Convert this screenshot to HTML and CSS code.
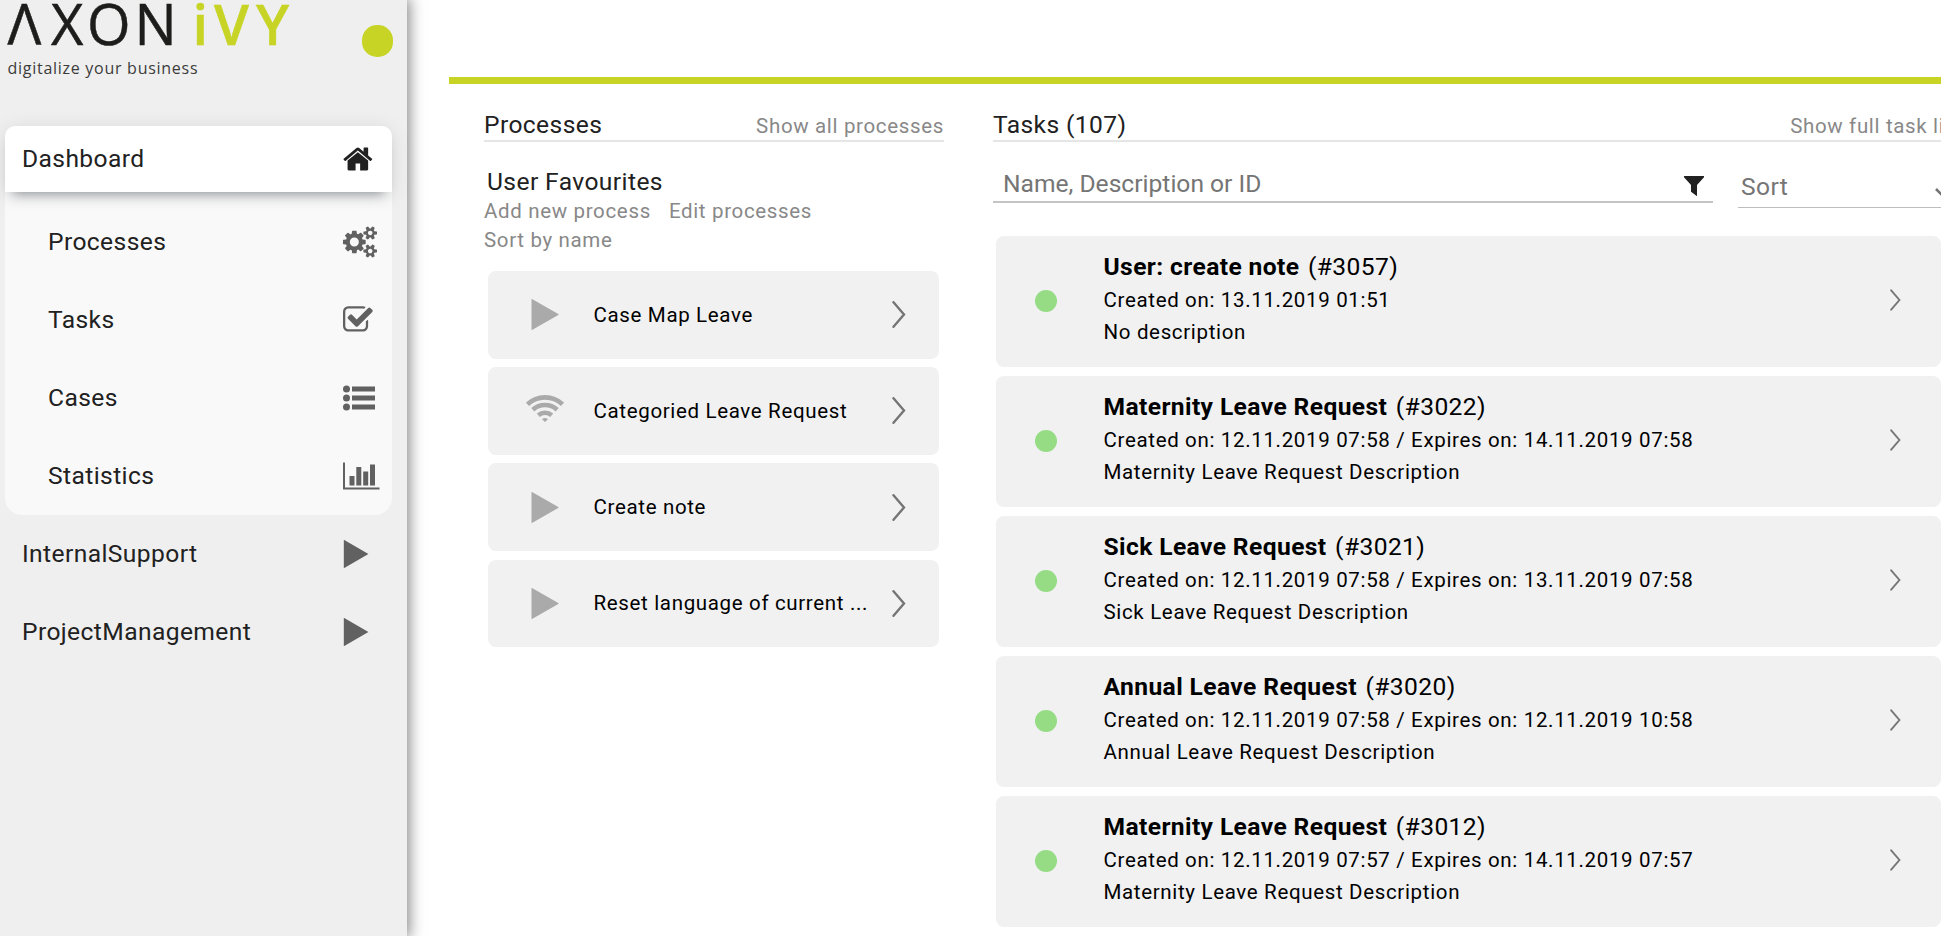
FILE: index.html
```html
<!DOCTYPE html>
<html lang="en">
<head>
<meta charset="utf-8">
<title>Axon Ivy Portal</title>
<link rel="stylesheet" href="styles.css">
</head>
<body>
<svg class="defs" width="0" height="0" aria-hidden="true">
  <symbol id="home" viewBox="64 0 1792 1792"><path d="M1472 992v480q0 26-19 45t-45 19h-384v-384h-256v384h-384q-26 0-45-19t-19-45v-480q0-1 .5-3t.5-3l575-474 575 474q1 2 1 6zm223-69l-62 74q-8 9-21 11h-3q-13 0-21-7l-692-577-692 577q-12 8-24 7-13-2-21-11l-62-74q-8-10-7-23.500t11-21.500l719-599q32-26 76-26t76 26l244 204v-195q0-14 9-23t23-9h192q14 0 23 9t9 23v408l219 182q10 8 11 21.500t-7 23.500z"/></symbol>
  <symbol id="cogs" viewBox="0 0 1920 1792"><path d="M896 896q0-106-75-181t-181-75-181 75-75 181 75 181 181 75 181-75 75-181zm768 512q0-52-38-90t-90-38-90 38-38 90q0 53 37.500 90.500t90.500 37.500 90.500-37.500 37.500-90.500zm0-1024q0-52-38-90t-90-38-90 38-38 90q0 53 37.500 90.500t90.500 37.500 90.500-37.500 37.500-90.500zm-384 421v185q0 10-7 19.500t-16 10.500l-155 24q-11 35-32 76 34 48 90 115 7 11 7 20 0 12-7 19-23 30-82.500 89.500t-78.500 59.500q-11 0-21-7l-115-90q-37 19-77 31-11 108-23 155-7 24-30 24h-186q-11 0-20-7.500t-10-17.500l-23-153q-34-10-75-31l-118 89q-7 7-20 7-11 0-21-8-144-133-144-160 0-9 7-19 10-14 41-53t47-61q-23-44-35-82l-152-24q-10-1-17-9.500t-7-19.500v-185q0-10 7-19.500t16-10.500l155-24q11-35 32-76-34-48-90-115-7-11-7-20 0-12 7-20 22-30 82-89t79-59q11 0 21 7l115 90q34-18 77-32 11-108 23-154 7-24 30-24h186q11 0 20 7.500t10 17.500l23 153q34 10 75 31l118-89q8-7 20-7 11 0 21 8 144 133 144 160 0 8-7 19-12 16-42 54t-45 60q23 48 34 82l152 23q10 2 17 10.500t7 19.500zm640 533v140q0 16-149 31-12 27-30 52 51 113 51 138 0 4-4 7-122 71-124 71-8 0-46-47t-52-68q-20 2-30 2t-30-2q-14 21-52 68t-46 47q-2 0-124-71-4-3-4-7 0-25 51-138-18-25-30-52-149-15-149-31v-140q0-16 149-31 13-29 30-52-51-113-51-138 0-4 4-7 4-2 35-20t59-34 30-16q8 0 46 46.500t52 67.500q20-2 30-2t30 2q51-71 92-112l6-2q4 0 124 70 4 3 4 7 0 25-51 138 17 23 30 52 149 15 149 31zm0-1024v140q0 16-149 31-12 27-30 52 51 113 51 138 0 4-4 7-122 71-124 71-8 0-46-47t-52-68q-20 2-30 2t-30-2q-14 21-52 68t-46 47q-2 0-124-71-4-3-4-7 0-25 51-138-18-25-30-52-149-15-149-31v-140q0-16 149-31 13-29 30-52-51-113-51-138 0-4 4-7 4-2 35-20t59-34 30-16q8 0 46 46.500t52 67.500q20-2 30-2t30 2q51-71 92-112l6-2q4 0 124 70 4 3 4 7 0 25-51 138 17 23 30 52 149 15 149 31z"/></symbol>
  <symbol id="check" viewBox="64 0 1792 1792"><path d="M1472 930v318q0 119-84.500 203.500t-203.500 84.500h-832q-119 0-203.500-84.500t-84.500-203.500v-832q0-119 84.500-203.500t203.500-84.500h832q63 0 117 25 15 7 18 23 3 17-9 29l-49 49q-10 10-23 10-3 0-9-2-23-6-45-6h-832q-66 0-113 47t-47 113v832q0 66 47 113t113 47h832q66 0 113-47t47-113v-254q0-13 9-22l64-64q10-10 23-10 6 0 12 3 20 8 20 29zm231-489l-814 814q-24 24-57 24t-57-24l-430-430q-24-24-24-57t24-57l110-110q24-24 57-24t57 24l263 263 647-647q24-24 57-24t57 24l110 110q24 24 24 57t-24 57z"/></symbol>
  <symbol id="list" viewBox="0 0 32 32"><circle cx="3.500" cy="7" r="3.500"/><circle cx="3.500" cy="16" r="3.500"/><circle cx="3.500" cy="25" r="3.500"/><path d="M9 4.500h23v5H9zM9 13.500h23v5H9zM9 22.500h23v5H9z"/></symbol>
  <symbol id="chart" viewBox="0 0 37 32"><path d="M0 2.500h2v25h34.500v2H0zM6.500 16h5v9.500h-5zM13.300 7h5v18.500h-5zM20.200 11.500h5v14h-5zM27 4.500h5v21h-5z"/></symbol>
  <symbol id="play" viewBox="0 0 28 31"><path d="M.5.300Q.5-.2 1 .1L27.300 15.100Q27.900 15.500 27.300 15.900L1 30.900Q.5 31.100.5 30.600z"/></symbol>
  <symbol id="wifi" viewBox="0 0 38 27"><g fill="none" stroke="currentColor" stroke-width="4.600"><path d="M1.500 9.300A25.500 25.500 0 0 1 36.500 9.300"/><path d="M6.800 14.800A18 18 0 0 1 31.200 14.800"/><path d="M12.300 20.300A10.300 10.300 0 0 1 25.700 20.300"/></g><path d="M16 24.200Q19 21.800 22 24.200L19 27z"/></symbol>
  <symbol id="chevron" viewBox="0 0 14 27"><path d="M1.500 1.200L12 13.500 1.500 25.800" fill="none" stroke="currentColor" stroke-width="2.400" stroke-linecap="round"/></symbol>
  <symbol id="filter" viewBox="0 0 20 20"><path d="M0 0h20v1.200L13 9v11.200L7 15.700V9L0 1.200z"/></symbol>
</svg>

<div class="app">
  <aside class="sidebar">
    <header class="brand">
      <svg class="logo" width="300" height="90">
        <text class="logo-name" x="7.500 51 87 134.500" y="45.300">ΛXON</text>
        <text class="logo-name logo-ivy" x="192.500 214 256" y="45.300">iVY</text>
        <text class="logo-claim" x="7.500" y="74" textLength="190">digitalize your business</text>
      </svg>
      <span class="toggle"></span>
    </header>
    <nav class="menu">
      <a class="item active">Dashboard<svg class="icon"><use href="#home"/></svg></a>
      <div class="submenu">
        <a class="item">Processes<svg class="icon wide"><use href="#cogs"/></svg></a>
        <a class="item">Tasks<svg class="icon"><use href="#check"/></svg></a>
        <a class="item">Cases<svg class="icon"><use href="#list"/></svg></a>
        <a class="item">Statistics<svg class="icon chart"><use href="#chart"/></svg></a>
      </div>
      <a class="item">InternalSupport<svg class="icon play"><use href="#play"/></svg></a>
      <a class="item">ProjectManagement<svg class="icon play"><use href="#play"/></svg></a>
    </nav>
  </aside>

  <main class="content">
    <div class="rule"></div>
    <div class="columns">
      <section class="processes">
        <header class="heading"><h2>Processes</h2><a class="link">Show all processes</a></header>
        <h3>User Favourites</h3>
        <div class="links"><a class="link">Add new process</a><a class="link">Edit processes</a><a class="link">Sort by name</a></div>
        <ul class="process-list">
          <li><span class="kind"><svg class="start"><use href="#play"/></svg></span><span class="name">Case Map Leave</span><svg class="go"><use href="#chevron"/></svg></li>
          <li><span class="kind"><svg class="wifi"><use href="#wifi"/></svg></span><span class="name">Categoried Leave Request</span><svg class="go"><use href="#chevron"/></svg></li>
          <li><span class="kind"><svg class="start"><use href="#play"/></svg></span><span class="name">Create note</span><svg class="go"><use href="#chevron"/></svg></li>
          <li><span class="kind"><svg class="start"><use href="#play"/></svg></span><span class="name">Reset language of current ...</span><svg class="go"><use href="#chevron"/></svg></li>
        </ul>
      </section>

      <section class="tasks">
        <header class="heading"><h2>Tasks (107)</h2><a class="link">Show full task list</a></header>
        <div class="tools">
          <div class="search"><span>Name, Description or ID</span><svg class="filter"><use href="#filter"/></svg></div>
          <div class="sort"><span>Sort</span><svg class="caret" viewBox="0 0 14 8"><path d="M1 1l6 6 6-6" fill="none" stroke="currentColor" stroke-width="2.600"/></svg></div>
        </div>
        <ul class="task-list">
          <li><i class="dot"></i><div class="info"><p class="title"><b>User: create note</b> (#3057)</p><p>Created on: 13.11.2019 01:51</p><p>No description</p></div><svg class="open"><use href="#chevron"/></svg></li>
          <li><i class="dot"></i><div class="info"><p class="title"><b>Maternity Leave Request</b> (#3022)</p><p>Created on: 12.11.2019 07:58 / Expires on: 14.11.2019 07:58</p><p>Maternity Leave Request Description</p></div><svg class="open"><use href="#chevron"/></svg></li>
          <li><i class="dot"></i><div class="info"><p class="title"><b>Sick Leave Request</b> (#3021)</p><p>Created on: 12.11.2019 07:58 / Expires on: 13.11.2019 07:58</p><p>Sick Leave Request Description</p></div><svg class="open"><use href="#chevron"/></svg></li>
          <li><i class="dot"></i><div class="info"><p class="title"><b>Annual Leave Request</b> (#3020)</p><p>Created on: 12.11.2019 07:58 / Expires on: 12.11.2019 10:58</p><p>Annual Leave Request Description</p></div><svg class="open"><use href="#chevron"/></svg></li>
          <li><i class="dot"></i><div class="info"><p class="title"><b>Maternity Leave Request</b> (#3012)</p><p>Created on: 12.11.2019 07:57 / Expires on: 14.11.2019 07:57</p><p>Maternity Leave Request Description</p></div><svg class="open"><use href="#chevron"/></svg></li>
        </ul>
      </section>
    </div>
  </main>
</div>
</body>
</html>
```
FILE: styles.css
```css
* { box-sizing: border-box; margin: 0; padding: 0; }
body {
  height: 936px;
  overflow: hidden;
  background: #fff;
  color: #212121;
  font-family: Roboto, sans-serif;
  font-size: 24.6px;
  letter-spacing: 0.4px;
}
svg { display: block; fill: currentColor; flex: none; }
ul { list-style: none; }
h2, h3 { font-size: inherit; font-weight: 400; }
.defs { position: absolute; }
.app { display: flex; height: 936px; }

/* Sidebar */
.sidebar {
  flex: none;
  width: 407px;
  background: #efefef;
  box-shadow: 0 0 14px 2px rgba(0, 0, 0, 0.5);
}
.brand { display: flex; height: 126px; }
.logo-name { font: 400 56px "Open Sans", sans-serif; letter-spacing: 0; fill: #1d1d1b; stroke: #1d1d1b; stroke-width: 0.5px; }
.logo-ivy { font-weight: 600; fill: #c7d426; stroke: #c7d426; }
.logo-claim { font: 400 16px "Open Sans", sans-serif; letter-spacing: 0; fill: #3c3c3b; }
.toggle { width: 31px; height: 32px; margin: 25px 0 0 62px; border-radius: 15px; background: #c7d426; }
.menu { width: 387px; margin-left: 5px; }
.item {
  display: flex;
  align-items: center;
  justify-content: space-between;
  height: 78px;
  padding: 0 17px;
  line-height: 30px;
}
.item.active {
  position: relative;
  height: 66px;
  padding-bottom: 1px;
  border-radius: 10px 10px 0 0;
  background: #fff;
  box-shadow: 0 10px 12px -8px rgba(60, 70, 80, 0.5), 0 3px 20px rgba(0, 0, 0, 0.1);
}
.submenu {
  height: 323px;
  padding: 11px 0 0 26px;
  border-radius: 0 0 17px 17px;
  background: #f9f9f9;
}
.icon { width: 32px; height: 32px; color: #616161; }
.active .icon { color: #212121; }
.icon.wide { width: 34px; }
.icon.chart { width: 37px; }
.icon.play { width: 26px; height: 28px; }
.item .icon { margin-right: calc(32px - var(--w, 32px)); }
.item .icon.wide { --w: 34px; }
.item .icon.chart { --w: 37px; }
.item .icon.play { --w: 26px; }

/* Content */
.content { flex: none; width: 1534px; padding: 77px 0 0 42px; overflow: hidden; }
.rule { height: 7px; background: #c7d426; }
.columns { display: flex; }
.processes { flex: none; width: 460px; margin-left: 35px; }
.tasks { flex: none; width: 970px; margin-left: 49px; }
.heading {
  display: flex;
  align-items: baseline;
  justify-content: space-between;
  height: 58px;
  padding-top: 26px;
  border-bottom: 2px solid #e6e6e6;
  line-height: 30px;
}
.link { color: #888; font-size: 20.5px; letter-spacing: 0.66px; white-space: nowrap; }
.processes h3 { padding: 25px 0 0 3px; line-height: 30px; }
.links { display: flex; flex-wrap: wrap; column-gap: 18px; width: 380px; line-height: 29px; }
.process-list { display: grid; gap: 8.700px; width: 451px; margin: 16px 0 0 4px; }
.process-list li {
  display: flex;
  align-items: center;
  height: 87.500px;
  padding-right: 33px;
  border-radius: 8px;
  background: #f1f1f1;
  color: #000;
  font-size: 20.5px;
  letter-spacing: 0.66px;
}
.kind { display: flex; justify-content: center; width: 106px; padding-left: 7px; color: #aaa; }
.start { width: 28px; height: 31px; }
.wifi { width: 38px; height: 27px; margin-top: -5px; }
.name { flex: 1; margin-left: -0.5px; white-space: nowrap; }
.go { width: 14px; height: 27px; color: #757575; }

/* Tasks */
.tools { display: flex; height: 94px; color: #757575; }
.search {
  display: flex;
  justify-content: space-between;
  width: 720px;
  height: 61px;
  padding: 27px 9px 0 10px;
  border-bottom: 2px solid #c4c4c4;
  line-height: 30px;
  letter-spacing: 0;
}
.filter { width: 20px; height: 20px; margin-top: 7px; color: #212121; }
.sort {
  display: flex;
  justify-content: space-between;
  width: 212px;
  height: 66px;
  margin-left: 25px;
  padding: 30px 1px 0 3px;
  border-bottom: 1px solid #bdbdbd;
  line-height: 30px;
}
.caret { width: 14px; height: 8px; margin-top: 16px; }
.task-list { display: grid; gap: 9px; width: 945px; margin-left: 3px; }
.task-list li {
  display: flex;
  align-items: center;
  height: 131px;
  padding-right: 40px;
  border-radius: 8px;
  background: #f1f1f1;
  color: #000;
}
.dot { width: 22px; height: 22px; margin: -1px 47px 0 38.500px; border-radius: 50%; background: #95dc84; }
.info { flex: 1; height: 131px; padding-top: 15px; font-size: 20.5px; line-height: 32px; letter-spacing: 0.66px; white-space: nowrap; }
.title { font-size: 24.6px; letter-spacing: 0.4px; line-height: 32px; padding-bottom: 1px; }
.title b { font-weight: 700; margin-right: 2px; }
.open { width: 11px; height: 22px; margin-top: -4px; color: #757575; }
```
